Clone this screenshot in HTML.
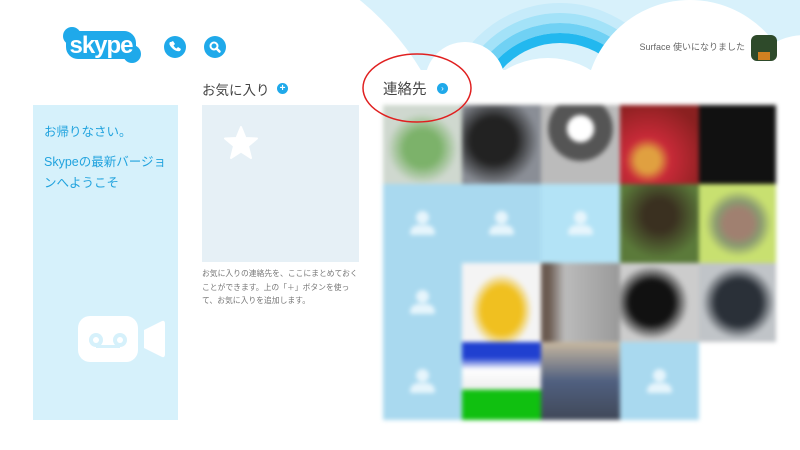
<!DOCTYPE html>
<html><head><meta charset="utf-8"><style>
*{margin:0;padding:0;box-sizing:border-box}
html,body{width:800px;height:450px;overflow:hidden}
body{background:#fff;font-family:"Liberation Sans","Noto Sans CJK JP",sans-serif;position:relative}
.abs{position:absolute}
.grid{left:383px;top:105px;width:393px;height:315px;filter:blur(2px);overflow:hidden}
.t{position:absolute;width:79px;height:79px}
.p{background:#a9d9ef}
.p::before{content:"";position:absolute;left:33px;top:27px;width:13px;height:13px;border-radius:50%;background:#e6f5fc}
.p::after{content:"";position:absolute;left:27px;top:41px;width:25px;height:10px;border-radius:8px 8px 2px 2px;background:#e6f5fc}
</style></head><body>
<svg class="abs" style="left:0;top:0" width="800" height="100">
<rect x="330" y="0" width="470" height="70" fill="#d8f1fb"/>
<g fill="none" stroke-width="10">
<circle cx="560" cy="120" r="112" stroke="#c6ebfa"/>
<circle cx="560" cy="120" r="102" stroke="#a3e2f8"/>
<circle cx="560" cy="120" r="92" stroke="#70d1f4"/>
<circle cx="560" cy="120" r="82" stroke="#22b8ef"/>
</g>
<g fill="#fff">
<circle cx="190" cy="210" r="270"/>
<circle cx="465" cy="82" r="40"/>
<circle cx="548" cy="140" r="82"/>
<circle cx="690" cy="105" r="105"/>
<circle cx="805" cy="100" r="65"/>
<rect x="0" y="72" width="800" height="28"/>
</g>
</svg>
<svg class="abs" style="left:62px;top:26px" width="82" height="40">
<g fill="#1fa9ea"><circle cx="10" cy="10" r="9"/><circle cx="70" cy="28" r="9"/><rect x="4" y="5" width="70" height="28" rx="12"/></g>
<text x="39" y="27" text-anchor="middle" font-family="Liberation Sans" font-weight="bold" font-size="24" fill="#fff" letter-spacing="-1">skype</text>
</svg>
<svg class="abs" style="left:163px;top:35px" width="70" height="24">
<circle cx="12" cy="12" r="11" fill="#1fa9ea"/>
<path d="M8 7 l2-1 2 3-1.5 1.5 q1 2 3 3 l1.5-1.5 3 2-1 2 q-4 1-8-3 t-2-6z" fill="#fff"/>
<circle cx="52" cy="12" r="11" fill="#1fa9ea"/>
<circle cx="51" cy="11" r="3.5" fill="none" stroke="#fff" stroke-width="2"/>
<path d="M53.5 13.5 l3 3" stroke="#fff" stroke-width="2.5" stroke-linecap="round"/>
</svg>
<div class="abs" style="right:55px;top:40px;font-size:9px;color:#666">Surface 使いになりました</div>
<div class="abs" style="left:751px;top:35px;width:26px;height:26px;border-radius:6px;background:#2e4a2a"></div>
<div class="abs" style="left:758px;top:52px;width:12px;height:8px;background:#d08020"></div>
<div class="abs" style="left:202px;top:79px;font-size:13.5px;color:#444">お気に入り</div>
<div class="abs" style="left:277px;top:83px;width:11px;height:11px;border-radius:50%;background:#1fa9ea;color:#fff;font-size:10px;line-height:11px;text-align:center;font-weight:bold">+</div>
<div class="abs" style="left:383px;top:78px;font-size:14.5px;color:#444">連絡先</div>
<div class="abs" style="left:437px;top:83px;width:11px;height:11px;border-radius:50%;background:#1fa9ea;color:#fff;font-size:8px;line-height:11px;text-align:center">›</div>
<div class="abs" style="left:33px;top:105px;width:145px;height:315px;background:#d6f1fb"></div>
<div class="abs" style="left:44px;top:122px;font-size:12.5px;color:#21a3de;line-height:21px;width:126px">お帰りなさい。<div style="margin-top:9px;line-height:21px">Skypeの最新バージョンへようこそ</div></div>
<svg class="abs" style="left:78px;top:316px" width="90" height="48">
<rect x="0" y="0" width="60" height="46" rx="12" fill="#fff"/>
<path d="M66 14 L84 5 Q87 4 87 8 L87 38 Q87 42 84 41 L66 32Z" fill="#fff"/>
<circle cx="18" cy="24" r="7" fill="#d6f1fb"/><circle cx="18" cy="24" r="3" fill="#fff"/>
<circle cx="42" cy="24" r="7" fill="#d6f1fb"/><circle cx="42" cy="24" r="3" fill="#fff"/>
<rect x="18" y="29" width="24" height="3" fill="#d6f1fb"/>
</svg>
<div class="abs" style="left:202px;top:105px;width:157px;height:157px;background:#e6f0f6"></div>
<svg class="abs" style="left:223px;top:126px" width="36" height="34"><path d="M18 1 L22.5 12 L34 12.5 L25 20 L28 32 L18 25.5 L8 32 L11 20 L2 12.5 L13.5 12Z" fill="#fff" stroke="#fff" stroke-width="2" stroke-linejoin="round"/></svg>
<div class="abs" style="left:202px;top:267px;width:156px;font-size:7.8px;line-height:13.5px;color:#777">お気に入りの連絡先を、ここにまとめておくことができます。上の「＋」ボタンを使って、お気に入りを追加します。</div>
<div class="abs grid">
<div class="t" style="left:0;top:0;background:radial-gradient(circle at 50% 55%,#7cb26a 30%,#cfd8cf 60%)"></div>
<div class="t" style="left:79px;top:0;background:radial-gradient(circle at 40% 45%,#222 35%,#8a8e96 70%)"></div>
<div class="t" style="left:158px;top:0;background:radial-gradient(circle at 50% 30%,#fff 18%,#555 22%,#555 45%,#bbb 50%);"></div>
<div class="t" style="left:237px;top:0;background:radial-gradient(circle at 35% 70%,#e0a040 15%,#c82a38 30%,#8a2020 80%)"></div>
<div class="t" style="left:316px;top:0;background:#111"></div>
<div class="t p" style="left:0;top:79px"></div>
<div class="t p" style="left:79px;top:79px"></div>
<div class="t p" style="left:158px;top:79px;background:#b3e3f6"></div>
<div class="t" style="left:237px;top:79px;background:radial-gradient(circle at 50% 40%,#3a3020 25%,#5b7a3a 70%)"></div>
<div class="t" style="left:316px;top:79px;background:radial-gradient(circle at 50% 50%,#a08070 25%,#8a9a70 40%,#c8e070 60%)"></div>
<div class="t p" style="left:0;top:158px"></div>
<div class="t" style="left:79px;top:158px;background:radial-gradient(ellipse at 50% 60%,#f0c020 35%,#f4f4f4 55%)"></div>
<div class="t" style="left:158px;top:158px;background:linear-gradient(90deg,#6a5a50 10%,#bbb 30%,#999 100%)"></div>
<div class="t" style="left:237px;top:158px;background:radial-gradient(circle at 40% 50%,#111 35%,#ccc 60%)"></div>
<div class="t" style="left:316px;top:158px;background:radial-gradient(circle at 50% 50%,#2a3038 40%,#c0c4c8 65%)"></div>
<div class="t p" style="left:0;top:237px;height:78px"></div>
<div class="t" style="left:79px;top:237px;height:78px;background:linear-gradient(#2040d0 0,#2040d0 20%,#fff 35%,#eee 60%,#10c010 62%)"></div>
<div class="t" style="left:158px;top:237px;height:78px;background:linear-gradient(#c8b8a0,#506080 50%,#404858)"></div>
<div class="t p" style="left:237px;top:237px;height:78px"></div>
</div>
<svg class="abs" style="left:360px;top:50px" width="120" height="80"><ellipse cx="57" cy="38" rx="54" ry="34" fill="none" stroke="#e02020" stroke-width="1.5"/></svg>
</body></html>
